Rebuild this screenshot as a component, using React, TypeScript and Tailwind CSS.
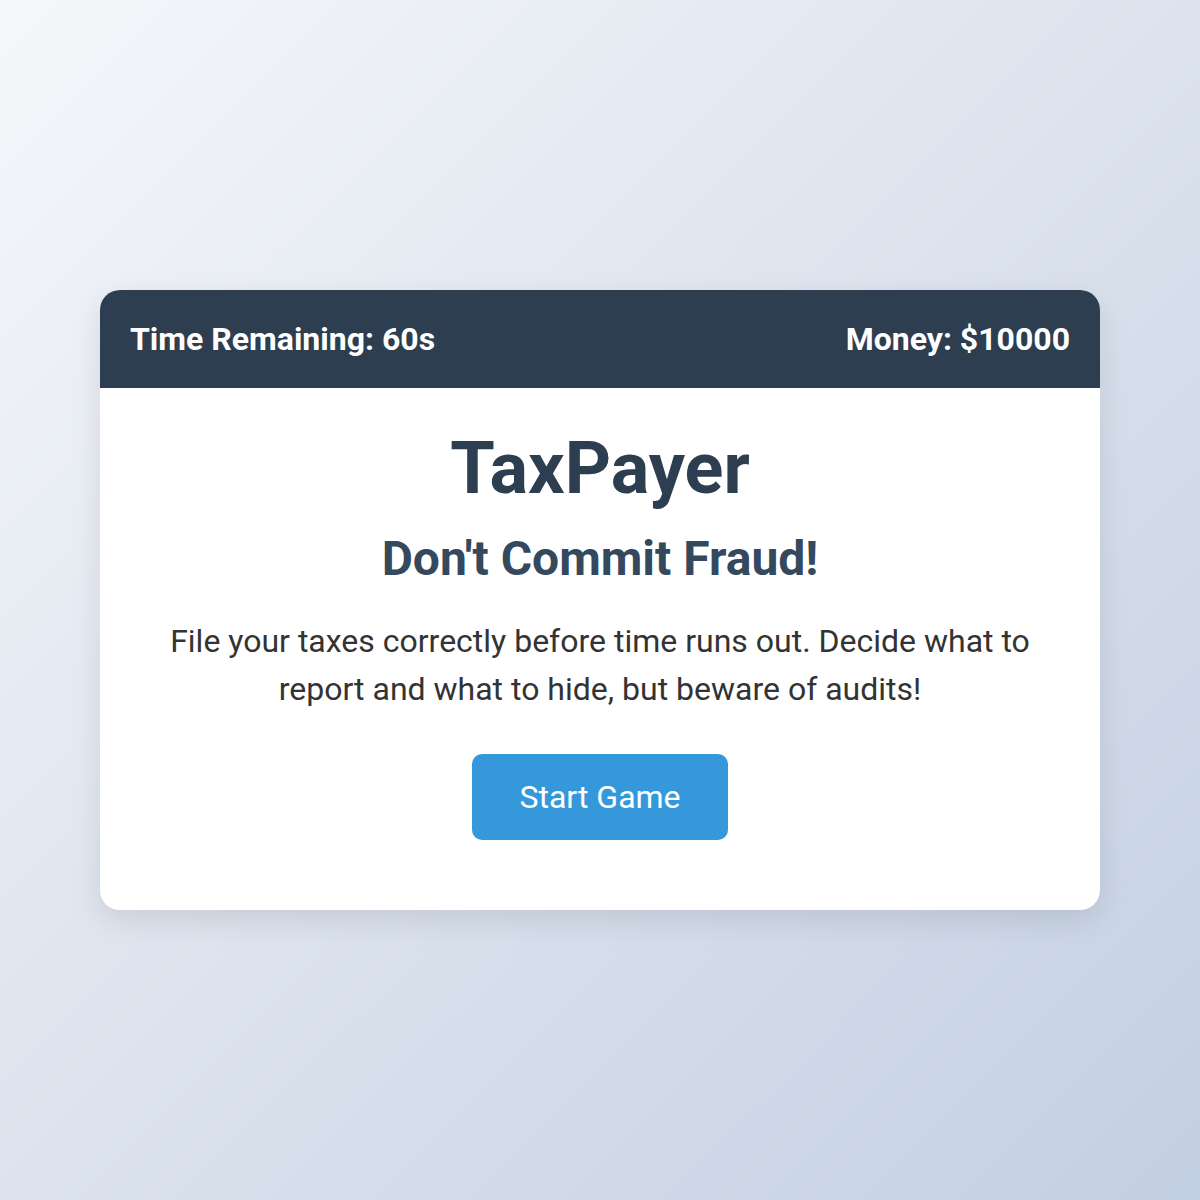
export default function App() {
  return (
    <div
      className="w-full min-h-[1200px] flex items-center justify-center bg-[linear-gradient(135deg,#f5f7fa_0%,#c3cfe2_100%)]"
      style={{ fontFamily: "Roboto, 'Liberation Sans', sans-serif" }}
    >
      <div className="w-[1000px] bg-white rounded-[20px] overflow-hidden shadow-[0_10px_30px_rgba(0,0,0,0.1)]">
        <div className="h-[98px] bg-[#2c3e50] text-white flex items-center justify-between px-[30px] text-[32px] font-bold">
          <span>Time Remaining: 60s</span>
          <span>Money: $10000</span>
        </div>
        <div className="flex flex-col items-center text-center px-[30px] pt-[38px] pb-[70px]">
          <h1 className="h-[86px] text-[72px] leading-[86px] font-bold text-[#2c3e50]">TaxPayer</h1>
          <h2 className="mt-[18px] h-[58px] text-[48px] leading-[58px] font-bold text-[#34495e]">Don't Commit Fraud!</h2>
          <p className="mt-[29px] text-[32px] leading-[48px] text-[#333] max-w-[900px]">
            File your taxes correctly before time runs out. Decide what to report and what to hide, but beware of audits!
          </p>
          <button className="mt-[41px] w-[256px] h-[86px] rounded-[10px] bg-[#3498db] text-white text-[32px]">
            Start Game
          </button>
        </div>
      </div>
    </div>
  );
}
